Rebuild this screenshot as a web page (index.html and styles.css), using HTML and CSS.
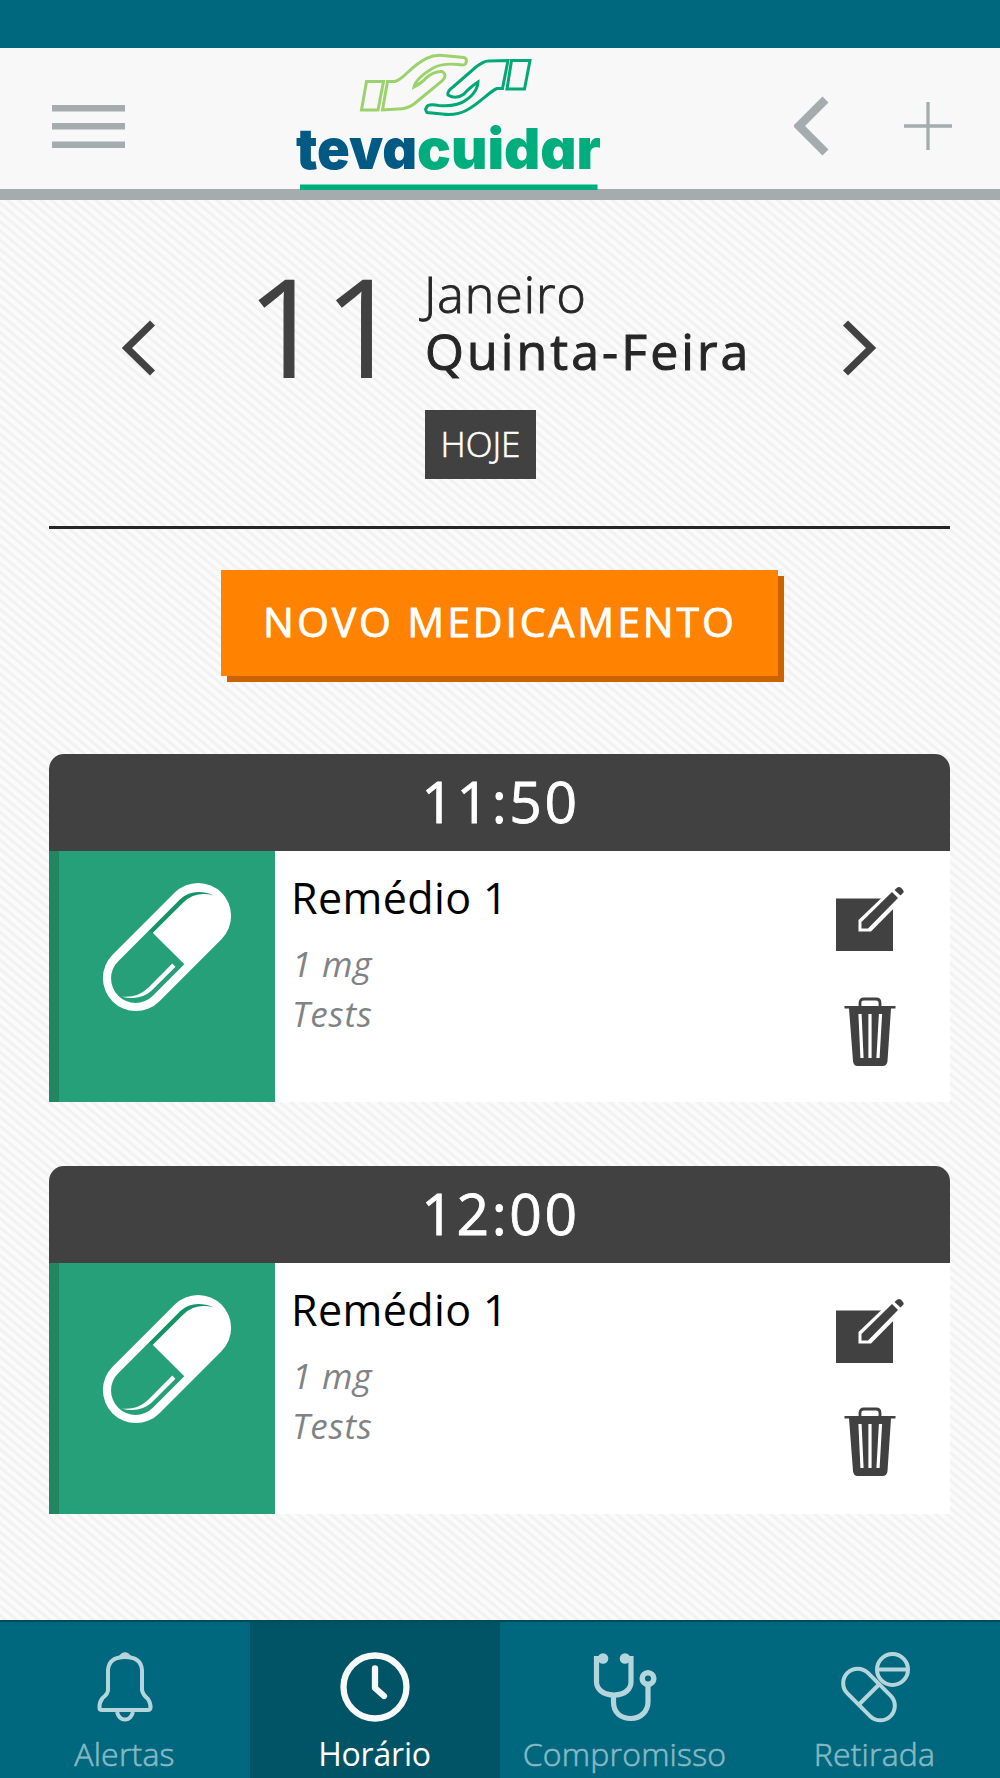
FILE: index.html
```html
<!DOCTYPE html>
<html lang="pt-BR">
<head>
<meta charset="utf-8">
<title>Teva Cuidar</title>
<link rel="stylesheet" href="styles.css">
</head>
<body>
<svg width="0" height="0" class="defs">
  <symbol id="pill" viewBox="0 0 130 130">
    <g transform="translate(65 65) rotate(-45)">
      <rect x="-77" y="-33" width="154" height="66" rx="33" fill="#fff"/>
      <path d="M0-24.500H-44.500A24.500 24.500 0 0 0-44.500 24.500H0Z" fill="#26a078"/>
      <path d="M-1-24.500H43Q61-23.500 69.500-3.500Q60-19.500 43-20H-1Z" fill="#149466"/>
      <path d="M-8 15.500V20H-42Q-58 19-67.500 2.500Q-58 15-42 15.500Z" fill="#fff"/>
    </g>
  </symbol>
  <symbol id="edit" viewBox="0 0 70 66">
    <path d="M1 12.500H58V65H1Z" fill="#414141"/>
    <path d="M23.500 45.500V34L59 0L70 11L36 45.500Z" fill="#fff"/>
    <path d="M26.500 42.500V36L57 6L63 12L33 42.500Z" fill="#414141"/>
    <path d="M59.500 4L62 1.800Q64 0 66 1.800L68 4Q69.500 6 67.500 7.500L65.500 9.500Z" fill="#414141"/>
  </symbol>
  <symbol id="trash" viewBox="0 0 52 70">
    <path d="M16 10V6Q16 2 20 2H32Q36 2 36 6V10" fill="none" stroke="#414141" stroke-width="2.800"/>
    <path d="M.5 9H51.500V11.500H47L43.500 64Q43 69 38.500 69H13.500Q9.500 69 9 64L5 11.500H.5Z" fill="#414141"/>
    <path d="M16 17L18 61M26 17V61M36.500 17L34 61" stroke="#fff" stroke-width="3.200" fill="none"/>
  </symbol>
</svg>
<div class="status"></div>
<header class="header">
  <svg class="menu" viewBox="0 0 73 43" fill="#a4acae"><path d="M0 0H73V6.500H0ZM0 18H73V24.500H0ZM0 36.500H73V43H0Z"/></svg>
  <svg class="logo" viewBox="0 0 320 143">
    <g fill="none" stroke-width="3" transform="translate(60 0)">
      <g stroke="#9bd26b">
        <path d="M16.500 34.500H33.500L28 63H11.500Z"/>
        <path d="M37.500 34.500H45Q50 33 57 26C72 12 82 7 93 8.500L114 10.500Q118 11.500 115.500 17Q114 18.500 108 17.500Q93 16 84 20.500Q66 31 64 40Q73 35 76 31Q84 24 92 24.500Q98 28 92 34L64 57Q57 62 48 62L32.500 63Z"/>
      </g>
      <g stroke="#00a876">
        <path d="M161.500 13.500H180L174.500 42H157Z"/>
        <path d="M158 13.500L152.500 41.500H147C140 44 130 56 117 63Q106 69 92 67L77 65.500Q74 62 78 58.500Q81 57 89 58.500Q107 60 116 53C127 46 128 37 128 35Q119 41 114 47Q106 53 98 48Q97 44 103 40L126 20Q134 14 138 14Z"/>
      </g>
    </g>
    <text x="6" y="121.500" textLength="121" lengthAdjust="spacingAndGlyphs" fill="#005a83">teva</text>
    <text x="127" y="121.500" textLength="184" lengthAdjust="spacingAndGlyphs" fill="#00ad7c">cuidar</text>
    <path d="M10 137.500H307.500V143H10Z" fill="#00ad7c"/>
  </svg>
  <div class="tools">
    <svg width="36" height="60" viewBox="0 0 36 60"><path d="M31.500 3.500L5 30L31.500 56.500" fill="none" stroke="#a4acae" stroke-width="8.500"/></svg>
    <svg width="48" height="48" viewBox="0 0 48 48"><path d="M0 24H48M24 0V48" stroke="#a4acae" stroke-width="3.300"/></svg>
  </div>
</header>
<main class="main">
  <section class="date">
    <svg class="arrow" viewBox="0 0 34 56"><path d="M30.500 3L5 28L30.500 53" fill="none" stroke="#414141" stroke-width="7.200"/></svg>
    <div class="day">11</div>
    <div class="info">
      <div class="month">Janeiro</div>
      <div class="weekday">Quinta-Feira</div>
      <div class="today">HOJE</div>
    </div>
    <svg class="arrow next" viewBox="0 0 34 56"><path d="M3.500 3L29 28L3.500 53" fill="none" stroke="#414141" stroke-width="7.200"/></svg>
  </section>
  <button class="new">NOVO MEDICAMENTO</button>
  <article class="card">
    <h2>11:50</h2>
    <div class="row">
      <div class="thumb"><svg><use href="#pill"/></svg></div>
      <div class="text"><h3>Remédio 1</h3><p class="dose">1 mg</p><p>Tests</p></div>
      <div class="actions"><svg class="edit"><use href="#edit"/></svg><svg class="trash"><use href="#trash"/></svg></div>
    </div>
  </article>
  <article class="card">
    <h2>12:00</h2>
    <div class="row">
      <div class="thumb"><svg><use href="#pill"/></svg></div>
      <div class="text"><h3>Remédio 1</h3><p class="dose">1 mg</p><p>Tests</p></div>
      <div class="actions"><svg class="edit"><use href="#edit"/></svg><svg class="trash"><use href="#trash"/></svg></div>
    </div>
  </article>
</main>
<nav class="tabs">
  <a class="tab"><svg viewBox="0 0 72 72" fill="none" stroke="#b5d5dc" stroke-width="4" stroke-linejoin="round"><path d="M19 19Q20 6 36 6Q52 6 53 19V39Q54 44 59 48Q62 53 61.500 57Q61 59 59 59H13Q10.500 59 10.500 57Q10 52 13.500 47Q19 43 19 39Z"/><path d="M28 61Q30 68.500 36 68.500Q42 68.500 44 61"/><path d="M30 6Q33 2 36 2Q39 2 42 6Z" fill="#b5d5dc" stroke-width="1.500"/></svg><span>Alertas</span></a>
  <a class="tab active"><svg viewBox="0 0 72 72" fill="none" stroke="#f6f8f9" stroke-width="6.300" stroke-linecap="round" stroke-linejoin="round"><circle cx="36" cy="36" r="31.500"/><path d="M36 17.500V37L45 45"/></svg><span>Horário</span></a>
  <a class="tab"><svg viewBox="0 0 72 72" fill="none" stroke="#b5d5dc" stroke-width="5.200"><path d="M14 7.500H7.500V31C7.500 38 14 44 25 44S42 38 42 31V7.500H36M24.500 44V51C24.500 62 32 67.500 42 67.500S59 60 59 51V34"/><circle cx="14" cy="7.500" r="5.300" fill="#b5d5dc" stroke="none"/><circle cx="36" cy="7.500" r="5.300" fill="#b5d5dc" stroke="none"/><circle cx="59" cy="27.500" r="5.800" stroke-width="5.500"/></svg><span>Compromisso</span></a>
  <a class="tab"><svg viewBox="0 0 72 72" fill="none" stroke="#b5d5dc" stroke-width="4"><circle cx="53.500" cy="18.500" r="15.500"/><path d="M38 18.500H69"/><g transform="translate(30 43.500) rotate(45)"><rect x="-30.500" y="-14.500" width="61" height="29" rx="14.500"/><path d="M0-14.500V14.500"/></g></svg><span>Retirada</span></a>
</nav>
</body>
</html>
```
FILE: styles.css
```css
* { box-sizing: border-box; }
body {
  margin: 0;
  width: 1000px;
  height: 1778px;
  display: flex;
  flex-direction: column;
  overflow: hidden;
  font-family: "Open Sans", "Noto Sans", sans-serif;
  background: repeating-linear-gradient(40deg, #fbfbfb 0 2.200px, #f1f1f1 4.200px 5px, #fbfbfb 7.070px);
}
h2, h3, p { margin: 0; font-weight: 400; }
svg { display: block; flex: none; }
.defs { position: absolute; }
.status { height: 47.500px; background: #00687e; flex: none; }
.header {
  height: 152.500px;
  flex: none;
  display: flex;
  align-items: flex-start;
  background: #f8f8f8;
  border-bottom: 11px solid #a4acae;
}
.menu { width: 73px; height: 43px; margin: 57px 0 0 52px; }
.logo { width: 320px; height: 143px; margin: -1px 0 0 165px; overflow: visible; }
.logo text { font: 900 56px "Inter", sans-serif; font-feature-settings: "cv11"; }
.tools { display: flex; align-items: center; gap: 74px; height: 60px; margin: 48.500px 0 0 184px; }
.main { flex: 1; padding: 0 50px 0 49px; display: flex; flex-direction: column; align-items: center; }
.date {
  width: 901px;
  height: 329px;
  border-bottom: 3px solid #262626;
  display: flex;
  align-items: flex-start;
}
.arrow { width: 34px; height: 56px; margin: 120px 0 0 73px; }
.arrow.next { margin-left: auto; margin-right: 74px; }
.day { width: 172px; margin: 30px 0 0 90px; font-size: 138px; line-height: 188px; letter-spacing: -1.500px; color: #414141; white-space: nowrap; }
.info { margin-left: 7px; padding-top: 64px; white-space: nowrap; color: #262626; }
.month { font-size: 50px; line-height: 60px; font-weight: 300; letter-spacing: 1px; margin-left: -1px; -webkit-text-stroke: .9px #262626; }
.weekday { font-size: 50px; line-height: 54px; font-weight: 400; letter-spacing: 3.100px; -webkit-text-stroke: 1px #262626; }
.today {
  width: 111px; height: 69px; margin-top: 32px; padding-bottom: 2px;
  display: flex; align-items: center; justify-content: center;
  background: #414141; color: #fff; font-size: 35px; font-weight: 300; -webkit-text-stroke: .6px #fff;
}
.new {
  width: 557px; height: 106px; margin: 41px 0 0 0; padding: 0 0 4px 1px; border: 0; flex: none;
  background: #ff8200; color: #fff; box-shadow: 6px 6px 0 #cb6300;
  font: 400 41px "Open Sans", sans-serif; letter-spacing: 2.900px; white-space: nowrap; -webkit-text-stroke: .8px #fff;
}
.card { width: 901px; height: 348px; margin-top: 78px; flex: none; }
.card + .card { margin-top: 64px; }
.card h2 {
  height: 97px; line-height: 95px; text-align: center; border-radius: 15px 15px 0 0; padding-left: 2px;
  background: #414141; color: #fff; font-size: 57px; letter-spacing: 2.600px; -webkit-text-stroke: .8px #fff;
}
.row { height: 251px; display: flex; background: #fff; }
.thumb { width: 226px; border-left: 10px solid #218662; background: #26a078; padding: 31px 0 0 43px; }
.thumb svg { width: 130px; height: 130px; }
.text { flex: 1; padding: 18px 0 0 16px; }
.text h3 { font-size: 43px; line-height: 58px; color: #000; letter-spacing: .4px; }
.text p { padding-left: 1px; font-size: 35px; line-height: 50px; font-style: italic; letter-spacing: .8px; color: #808386; }
.text .dose { margin-top: 12px; }
.actions { width: 115px; padding-top: 35px; }
.edit { width: 70px; height: 66px; }
.trash { width: 52px; height: 70px; margin: 45px 0 0 9px; }
.card + .card .trash { margin-top: 43px; }
.tabs { height: 158px; flex: none; display: grid; grid-template-columns: repeat(4, 1fr); background: #00687e; border-top: 2px solid #004c5a; }
.tab { display: flex; flex-direction: column; align-items: center; padding: 29px 1px 0 0; color: #86b9c3; font-size: 32px; line-height: 44px; font-weight: 300; letter-spacing: .2px; -webkit-text-stroke: .6px #86b9c3; }
.tab svg { width: 72px; height: 72px; margin-bottom: 8.500px; }
.tab.active { background: #005465; color: #fff; font-weight: 400; letter-spacing: -.2px; -webkit-text-stroke: 0; }
```
